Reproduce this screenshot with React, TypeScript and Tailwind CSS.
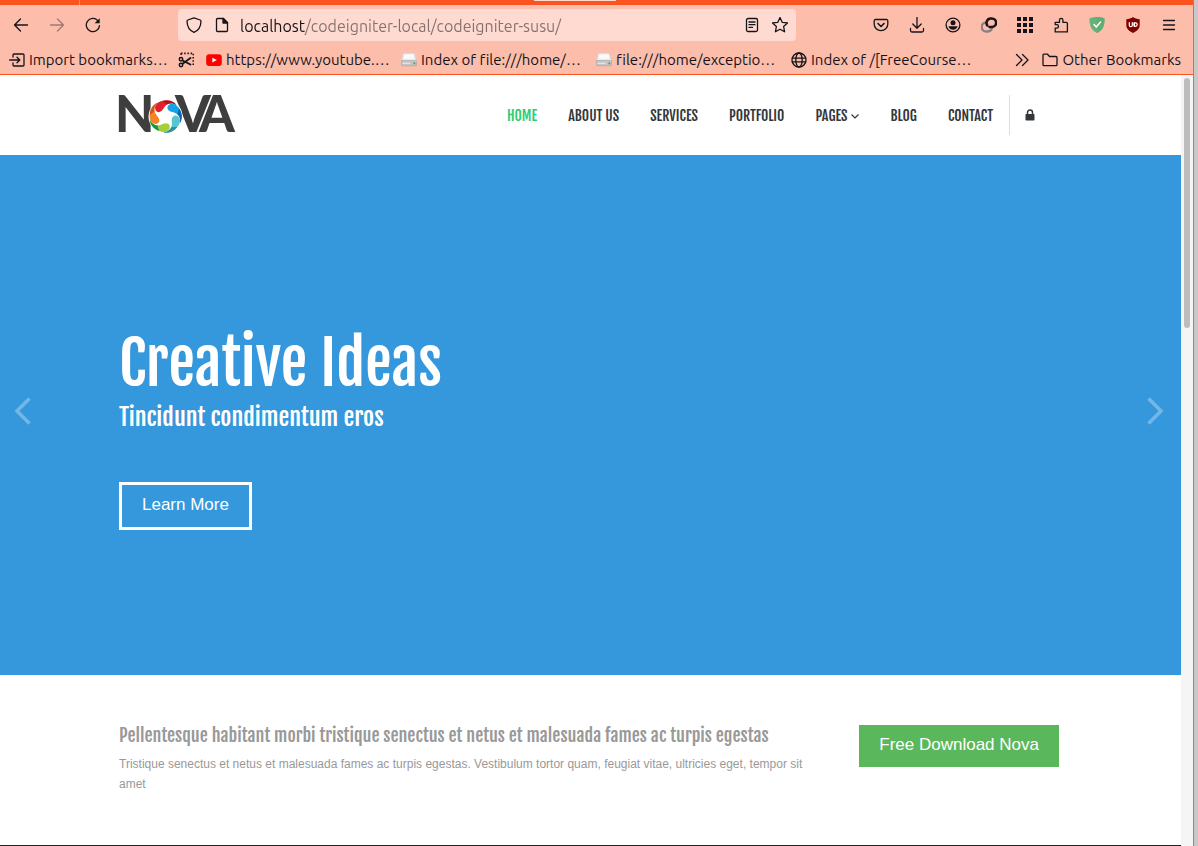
import type { ReactNode } from "react";

function Icon({ children, className = "size-4" }: { children: ReactNode; className?: string }) {
  return (
    <svg
      viewBox="0 0 16 16"
      className={`${className} shrink-0`}
      fill="none"
      stroke="currentColor"
      strokeWidth="1.3"
      strokeLinecap="round"
      strokeLinejoin="round"
      aria-hidden="true"
    >
      {children}
    </svg>
  );
}

const icons = {
  back: <path d="M14.5 8H1.5M7.5 2 1.5 8l6 6" />,
  forward: <path d="M1.5 8h13M8.5 2l6 6-6 6" />,
  reload: (
    <>
      <path d="M14.5 8.6A6.6 6.6 0 1 1 12.8 3.6" />
      <path d="M14.7 1.2v5H9.6z" fill="currentColor" stroke="none" />
    </>
  ),
  shield: <path d="M8 .8 14.2 3c.5.2.8.5.8 1-.1 5-1.9 9.3-7 11.400C2.900 13.300 1.100 9 1 4c0-.5.3-.8.800-1z" />,
  file: (
    <>
      <path d="M3.500 1.500h6l4 4v8a1 1 0 0 1-1 1h-9a1 1 0 0 1-1-1v-11a1 1 0 0 1 1-1z" />
      <path d="M9 1.500v4.500h4.500z" fill="currentColor" />
    </>
  ),
  reader: (
    <>
      <rect x="2.500" y="1.500" width="11" height="13" rx="1.500" />
      <path d="M5 5h6M5 7.700h6M5 10.400h3.500" />
    </>
  ),
  star: <path d="m8 .5 2.200 4.800 5.300.6-3.900 3.600 1 5.300L8 12.200l-4.600 2.600 1-5.300L.5 5.900l5.300-.6z" />,
  pocket: (
    <>
      <path d="M2.500 2.500h11a1.300 1.300 0 0 1 1.300 1.300v3.500a6.800 6.400 0 0 1-13.600 0V3.800a1.300 1.300 0 0 1 1.300-1.300z" />
      <path d="m5 6.500 3 3 3-3" strokeWidth="1.600" />
    </>
  ),
  download: <path d="M8 .5v10.500M3.800 7 8 11.200 12.200 7M1.500 11.500v2a1.500 1.500 0 0 0 1.500 1.500h10a1.500 1.500 0 0 0 1.500-1.500v-2" />,
  account: (
    <>
      <circle cx="8" cy="8" r="6.900" />
      <circle cx="8" cy="5.800" r="2.500" fill="currentColor" stroke="none" />
      <path d="M3.400 9.300h9.200A5 5 0 0 1 8 12.800a5 5 0 0 1-4.600-3.500z" fill="currentColor" stroke="none" />
    </>
  ),
  rings: (
    <>
      <path d="M7 5.500H5.200a4.300 4.300 0 0 0 0 9h1.500a4.300 4.300 0 0 0 4.300-3.800" stroke="#8a7f88" strokeWidth="2.300" strokeLinecap="butt" />
      <path d="M6.300 8.500A4.200 4.200 0 0 1 5.600 5a4.300 4.300 0 0 1 4.200-3.600h1a4.200 4.200 0 0 1 0 8.600H8.500" strokeWidth="2.500" />
    </>
  ),
  grid: <path d="M0 0h4v4H0zM6 0h4v4H6zM12 0h4v4h-4zM0 6h4v4H0zM6 6h4v4H6zM12 6h4v4h-4zM0 12h4v4H0zM6 12h4v4H6zM12 12h4v4h-4z" fill="currentColor" stroke="none" />,
  puzzle: <path d="M2.200 14.900v-3.700h1.500a1.800 1.800 0 0 0 0-3.600H2.200V5.300h4.300V3a1.700 1.700 0 0 1 3.400 0v2.300h3.300a1.200 1.200 0 0 1 1.200 1.200v8.400z" />,
  adguard: (
    <>
      <path d="M8 0c2.500 0 5.300.5 7.500 1.500C15.500 7.500 14.500 13 8 16 1.500 13 .5 7.500.5 1.500 2.700.5 5.500 0 8 0z" fill="#67b279" stroke="none" />
      <path d="M8 0c2.500 0 5.300.5 7.500 1.500C15.500 7.500 14.500 13 8 16z" fill="#5fae72" stroke="none" />
      <path d="m5 7.500 2.300 2.500L11.500 5" stroke="#fff" strokeWidth="1.500" />
    </>
  ),
  ublock: (
    <>
      <path d="M8 0c2 1.600 4.200 2 6.700 2.200V8c0 4-3 6.300-6.700 8-3.700-1.700-6.700-4-6.700-8V2.200C3.800 2 6 1.600 8 0z" fill="#800000" stroke="none" />
      <path d="M4.300 5.500v2.700a1.500 1.500 0 0 0 3 0V5.500M9.300 5.500v4" stroke="#fff" strokeWidth="1.200" />
      <circle cx="10.500" cy="7.600" r="1.700" stroke="#fff" strokeWidth="1.200" />
    </>
  ),
  menu: <path d="M2.500 3.500h11M2.500 8h11M2.500 12.500h11" />,
  importMarks: (
    <>
      <path d="M4 5V3a1 1 0 0 1 1-1h9a1 1 0 0 1 1 1v10a1 1 0 0 1-1 1H5a1 1 0 0 1-1-1v-2" />
      <path d="M.6 8h10M8 5.200 10.800 8 8 10.800" />
    </>
  ),
  scissors: (
    <>
      <path d="M3 1.300h12.300v12.500" strokeDasharray="1.500 1.700" strokeLinecap="butt" strokeWidth="1.700" />
      <path d="M3 1.300v3" strokeDasharray="1.500 1.500" strokeLinecap="butt" strokeWidth="1.700" />
      <path d="M4.500 8.500 12.500 12.500M5 11.500 12.500 6" strokeWidth="1.800" />
      <circle cx="3" cy="7.200" r="1.700" strokeWidth="1.500" />
      <circle cx="3" cy="13" r="1.700" strokeWidth="1.500" />
    </>
  ),
  youtube: (
    <>
      <rect x=".2" y="2.300" width="15.600" height="11.600" rx="3" fill="#f00" stroke="none" />
      <path d="m6.400 5.700 4.400 2.400-4.400 2.400z" fill="#fff" stroke="none" />
    </>
  ),
  drive: (
    <>
      <path d="M2.500 1.200h11l2 8H.5z" fill="#ececec" stroke="#cfcfcf" strokeWidth=".6" />
      <path d="M3.500 2.200h9l.8 4.500h-10.600z" fill="#fafafa" stroke="none" />
      <rect x=".4" y="8.500" width="15.200" height="5.300" rx=".8" fill="#c4c4c4" stroke="#9a9a9a" strokeWidth=".5" />
      <path d="M2 11.300h7" stroke="#e4e4e4" />
      <rect x="12.500" y="10.500" width="1.700" height="1.700" fill="#4e9a4a" stroke="none" />
    </>
  ),
  globe: (
    <>
      <circle cx="8" cy="8" r="7" />
      <ellipse cx="8" cy="8" rx="3.200" ry="7" />
      <path d="M1.200 6.200h13.600M1.200 9.800h13.600" />
    </>
  ),
  overflow: <path d="m2.500 2.500 5.500 5.500-5.500 5.500M8.500 2.500 14 8l-5.500 5.500" />,
  folder: <path d="M1 12.700V3.200a1 1 0 0 1 1-1h3.500l2 2.300H14a1 1 0 0 1 1 1v7.200a1 1 0 0 1-1 1H2a1 1 0 0 1-1-1z" />,
};

type IconName = keyof typeof icons;

function ToolButton({ name, label, disabled = false }: { name: IconName; label: string; disabled?: boolean }) {
  return (
    <button type="button" aria-label={label} disabled={disabled} className="flex h-8 w-9 items-center justify-center disabled:opacity-40">
      <Icon>{icons[name]}</Icon>
    </button>
  );
}

const extensions: { name: IconName; label: string }[] = [
  { name: "pocket", label: "Save to Pocket" },
  { name: "download", label: "Downloads" },
  { name: "account", label: "Account" },
  { name: "rings", label: "Containers" },
  { name: "grid", label: "Apps" },
  { name: "puzzle", label: "Extensions" },
  { name: "adguard", label: "Ad blocker" },
  { name: "ublock", label: "Content blocker" },
  { name: "menu", label: "Menu" },
];

const bookmarks: { name: IconName; label: string }[] = [
  { name: "youtube", label: "https://www.youtube.…" },
  { name: "drive", label: "Index of file:///home/…" },
  { name: "drive", label: "file:///home/exceptio…" },
  { name: "globe", label: "Index of /[FreeCourse…" },
];

function BrowserChrome() {
  return (
    <div className="border-b border-[#fb5420] bg-[#fcbdab] font-[Ubuntu,'Noto_Sans',sans-serif] text-[15px] text-[#15141a]">
      <div className="relative h-[5px] bg-[#fb5420]">
        <div className="absolute top-0 left-[79px] h-[5px] w-px bg-[#fd8a66]" />
        <div className="absolute top-0 left-[534px] h-px w-[82px] bg-[#fcd9cd]" />
      </div>
      <div className="flex items-center py-1 pr-1.5 pl-[3px]">
        <ToolButton name="back" label="Back" />
        <ToolButton name="forward" label="Forward" disabled />
        <ToolButton name="reload" label="Reload" />
        <div className="mx-[67px] flex h-8 flex-1 items-center gap-3 rounded bg-[#ffdad0] px-2">
          <Icon>{icons.shield}</Icon>
          <Icon>{icons.file}</Icon>
          <input
            type="text"
            aria-label="Address"
            defaultValue="localhost/codeigniter-local/codeigniter-susu/"
            className="-ml-0.5 min-w-0 flex-1 bg-[linear-gradient(to_right,#15141a_65px,#84706c_65px)] bg-clip-text pt-0.5 text-base text-transparent outline-none"
          />
          <button type="button" aria-label="Reader view">
            <Icon>{icons.reader}</Icon>
          </button>
          <button type="button" aria-label="Bookmark this page">
            <Icon>{icons.star}</Icon>
          </button>
        </div>
        {extensions.map((e) => (
          <ToolButton key={e.label} name={e.name} label={e.label} />
        ))}
      </div>
      <div className="flex h-[29px] items-center pr-3 pl-[9px] whitespace-nowrap">
        <button type="button" className="flex w-[169px] items-center gap-1">
          <Icon>{icons.importMarks}</Icon>
          <span className="pt-0.5">Import bookmarks…</span>
        </button>
        <button type="button" aria-label="Screenshot" className="mr-3">
          <Icon>{icons.scissors}</Icon>
        </button>
        {bookmarks.map((b) => (
          <a key={b.label} href="#" className="flex w-[195px] items-center gap-1">
            <Icon>{icons[b.name]}</Icon>
            <span className="pt-0.5 [font-variant-ligatures:none]">{b.label}</span>
          </a>
        ))}
        <button type="button" aria-label="More bookmarks" className="mr-3 ml-auto">
          <Icon>{icons.overflow}</Icon>
        </button>
        <button type="button" className="flex items-center gap-1">
          <Icon>{icons.folder}</Icon>
          <span className="pt-0.5">Other Bookmarks</span>
        </button>
      </div>
    </div>
  );
}

const petals = [
  { angle: 0, fill: "#e21f2d", shade: "#b5121b" },
  { angle: 72, fill: "#13a3e8", shade: "#0b66ad" },
  { angle: 144, fill: "#58c5d0", shade: "#2f8f9d" },
  { angle: 216, fill: "#a6ce39", shade: "#0d9a48" },
  { angle: 288, fill: "#f58427", shade: "#d4541f" },
];

function Logo() {
  return (
    <svg viewBox="0 0 118 42" className="h-[42px] w-[118px] overflow-visible" role="img" aria-label="Nova">
      <g fill="#3e3e3f" fontFamily="Lato, 'Liberation Sans', sans-serif" fontWeight="900" fontSize="51">
        <text x="-4" y="38">N</text>
        <text x="56" y="38">V</text>
        <text x="80" y="38">A</text>
      </g>
      <circle cx="46.500" cy="22.500" r="17" fill="#fff" />
      <g transform="translate(46.500 22.500) scale(.335)">
        {petals.map((p) => (
          <g key={p.angle} transform={`rotate(${p.angle})`}>
            <path d="M-26-38C-12-51 16-52 33-34 20-42 8-40 0-32-7-25-9-14-20-13-30-13-36-27-26-38Z" fill={p.fill} />
            <path d="M-10-46C8-52 24-46 33-34 22-41 12-41 4-36Z" fill={p.shade} />
          </g>
        ))}
      </g>
    </svg>
  );
}

const navItems = ["HOME", "ABOUT US", "SERVICES", "PORTFOLIO", "PAGES", "BLOG", "CONTACT"];

function SiteHeader() {
  return (
    <header className="pr-[3px]">
      <div className="mx-auto flex h-20 max-w-[940px] items-center justify-between">
        <a href="#">
          <Logo />
        </a>
        <nav className="flex items-center pr-6 font-['Fjalla_One',sans-serif] text-sm text-[#34373a]">
          <ul className="flex gap-[31px] pt-0.5 pr-4">
            {navItems.map((item) => (
              <li key={item}>
                <a href="#" className={item === "HOME" ? "text-[#2ecc71]" : "flex items-center gap-1"}>
                  {item}
                  {item === "PAGES" && (
                    <svg viewBox="0 0 8 5" className="h-[5px] w-2" fill="none" stroke="currentColor" strokeWidth="1.200" aria-hidden="true">
                      <path d="m.5.5 3.500 3.500L7.500.5" />
                    </svg>
                  )}
                </a>
              </li>
            ))}
          </ul>
          <a href="#" aria-label="Log in" className="flex h-10 items-center border-l border-[#ddd] pl-[15px]">
            <svg viewBox="0 0 10 12" className="h-3 w-2.5" aria-hidden="true">
              <rect x=".5" y="5" width="9" height="6.500" rx=".8" fill="#34373a" />
              <path d="M2.500 5.500V3.500a2.500 2.500 0 0 1 5 0v2" fill="none" stroke="#34373a" strokeWidth="1.500" />
            </svg>
          </a>
        </nav>
      </div>
    </header>
  );
}

function Arrow({ label, side }: { label: string; side: "left" | "right" }) {
  return (
    <button type="button" aria-label={label} className={`absolute top-[242px] text-white/30 ${side === "left" ? "left-3.5" : "right-[17px]"}`}>
      <svg viewBox="0 0 18 28" className="h-7 w-[18px]" fill="none" stroke="currentColor" strokeWidth="3.500" aria-hidden="true">
        <path d={side === "left" ? "M15.500 1.500 3 14l12.500 12.500" : "M2.500 1.500 15 14 2.500 26.500"} />
      </svg>
    </button>
  );
}

function Hero() {
  return (
    <section className="relative bg-[#3598dc] pt-[170px] pr-[3px] pb-[145px] text-white">
      <div className="mx-auto max-w-[940px]">
        <h1 className="font-['Fjalla_One',sans-serif] text-6xl leading-[76px]">Creative Ideas</h1>
        <h2 className="font-['Fjalla_One',sans-serif] text-2xl leading-8">Tincidunt condimentum eros</h2>
        <a
          href="#"
          className="mt-[49px] inline-block border-3 border-white px-5 pt-2 pb-2.5 font-['Liberation_Sans',Arial,sans-serif] text-[17px] leading-6"
        >
          Learn More
        </a>
      </div>
      <Arrow label="Previous slide" side="left" />
      <Arrow label="Next slide" side="right" />
    </section>
  );
}

function CallToAction() {
  return (
    <section className="border-b border-[#222] pt-[50px] pr-[3px] pb-[51px] font-['Liberation_Sans',Arial,sans-serif]">
      <div className="mx-auto flex max-w-[940px] items-start justify-between">
        <div className="max-w-[700px] text-[#999]">
          <h3 className="font-['Fjalla_One',sans-serif] text-lg leading-5">
            Pellentesque habitant morbi tristique senectus et netus et malesuada fames ac turpis egestas
          </h3>
          <p className="mt-[9px] text-xs leading-5">
            Tristique senectus et netus et malesuada fames ac turpis egestas. Vestibulum tortor quam, feugiat vitae, ultricies eget, tempor sit amet
          </p>
        </div>
        <a href="#" className="bg-[#5bb75b] px-5 pt-2 pb-2.5 text-[17px] leading-6 whitespace-nowrap text-white">
          Free Download Nova
        </a>
      </div>
    </section>
  );
}

export default function App() {
  return (
    <div className="flex min-h-screen bg-[#c8c8c8]">
      <div className="flex min-w-0 flex-1 flex-col bg-white">
        <BrowserChrome />
        <div className="flex flex-1">
          <main className="min-w-0 flex-1">
            <SiteHeader />
            <Hero />
            <CallToAction />
          </main>
          <div className="w-3 bg-[#f5f5f5] px-[3px] pt-[3px]">
            <div className="h-[250px] rounded-full bg-[#bdbdbd]" />
          </div>
        </div>
      </div>
      <div className="w-[5px] border-l border-[#8a8a8a]" />
    </div>
  );
}
